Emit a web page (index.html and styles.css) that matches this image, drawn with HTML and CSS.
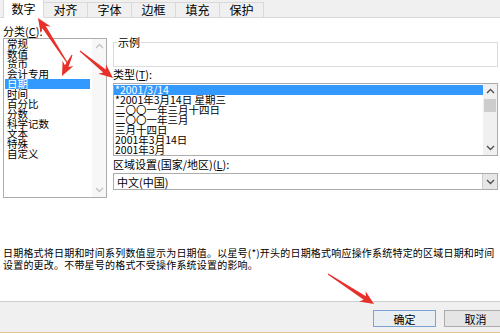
FILE: index.html
```html
<!DOCTYPE html>
<html lang="zh-CN">
<head>
<meta charset="utf-8">
<title>设置单元格格式</title>
<link rel="stylesheet" href="styles.css">
</head>
<body>
<div class="dialog">
  <div class="tabs">
    <div class="tab active">数字</div>
    <div class="tab">对齐</div>
    <div class="tab">字体</div>
    <div class="tab">边框</div>
    <div class="tab">填充</div>
    <div class="tab">保护</div>
  </div>
  <div class="panel">
    <div class="left">
      <div class="label">分类(<u>C</u>):</div>
      <div class="listbox cat">
        <ul class="items">
          <li>常规</li>
          <li>数值</li>
          <li>货币</li>
          <li>会计专用</li>
          <li class="sel">日期</li>
          <li>时间</li>
          <li>百分比</li>
          <li>分数</li>
          <li>科学记数</li>
          <li>文本</li>
          <li>特殊</li>
          <li>自定义</li>
        </ul>
        <div class="vscroll off">
          <div class="sbtn"><svg width="9" height="6" viewBox="0 0 9 6"><polyline points="1,5 4.5,1.5 8,5" /></svg></div>
          <div class="track"></div>
          <div class="sbtn"><svg width="9" height="6" viewBox="0 0 9 6"><polyline points="1,1 4.5,4.5 8,1" /></svg></div>
        </div>
      </div>
    </div>
    <div class="right">
      <fieldset class="sample"><legend>示例</legend></fieldset>
      <div class="label lbl-type">类型(<u>T</u>):</div>
      <div class="listbox types">
        <ul class="items">
          <li class="sel">*2001/3/14</li>
          <li>*2001年3月14日 星期三</li>
          <li>二〇〇一年三月十四日</li>
          <li>二〇〇一年三月</li>
          <li>三月十四日</li>
          <li>2001年3月14日</li>
          <li>2001年3月</li>
        </ul>
        <div class="vscroll">
          <div class="sbtn"><svg width="9" height="6" viewBox="0 0 9 6"><polyline points="1,5 4.5,1.5 8,5" /></svg></div>
          <div class="track"><div class="thumb"></div></div>
          <div class="sbtn"><svg width="9" height="6" viewBox="0 0 9 6"><polyline points="1,1 4.5,4.5 8,1" /></svg></div>
        </div>
      </div>
      <div class="label lbl-locale">区域设置(国家/地区)(<u>L</u>):</div>
      <div class="combo">
        <span class="combo-text">中文(中国)</span>
        <div class="dropbtn"><svg width="9" height="6" viewBox="0 0 9 6"><polyline points="1,1 4.5,4.5 8,1" /></svg></div>
      </div>
    </div>
  </div>
  <p class="desc">日期格式将日期和时间系列数值显示为日期值。以星号(*)开头的日期格式响应操作系统特定的区域日期和时间设置的更改。不带星号的格式不受操作系统设置的影响。</p>
  <div class="footer">
    <button class="btn default">确定</button>
    <button class="btn">取消</button>
  </div>
</div>
<svg class="arrows" width="500" height="333" viewBox="0 0 500 333">
  <polygon points="68.4,63.7 45.7,26.1 50.7,26.5 38,18 40.6,33.0 42.3,28.3 67.6,64.3" />
  <polygon points="72.5,55.2 68.5,67.0 73.4,66.0 62,76 62.6,60.8 64.9,65.2 71.6,54.8" />
  <polygon points="79.7,51.4 103.2,72.6 98.4,73.8 113,78 106.0,64.5 105.7,69.5 80.3,50.6" />
  <polygon points="327.7,274.4 363.7,299.7 359.0,301.4 374,304 365.6,291.3 365.9,296.3 328.3,273.6" />
</svg>
</body>
</html>
```

FILE: styles.css
```css
* { box-sizing: border-box; }

body {
  margin: 0;
  width: 500px;
  height: 333px;
  overflow: hidden;
  position: relative;
  background: #ffffff;
  color: #000000;
  font-family: "Noto Sans CJK SC", "Noto Sans", sans-serif;
}

.dialog {
  display: flex;
  flex-direction: column;
  height: 333px;
}

/* tabs */
.tabs {
  height: 18px;
  flex: none;
  display: flex;
  align-items: flex-end;
  padding-left: 3px;
  background: #f0f0f0;
  border-bottom: 1px solid #d9d9d9;
}
.tab {
  width: 45px;
  height: 15px;
  margin-right: -1px;
  border: 1px solid #d9d9d9;
  border-bottom: none;
  background: #f0f0f0;
  font-size: 12px;
  line-height: 14px;
  text-align: center;
}
.tab.active {
  width: 41px;
  height: 19px;
  margin-bottom: -1px;
  background: #ffffff;
  line-height: 18px;
  position: relative;
  z-index: 1;
}

/* panel */
.panel {
  display: flex;
  padding: 6px 0 0 3px;
  flex: none;
}
.left {
  width: 104px;
  flex: none;
}
.right {
  width: 385px;
  margin-left: 6px;
  flex: none;
}

.label {
  font-size: 11px;
  line-height: 14px;
  height: 14px;
  white-space: nowrap;
}

.listbox {
  border: 1px solid #acacac;
  display: flex;
  background: #ffffff;
}
.listbox.cat {
  height: 160px;
}
.listbox.types {
  height: 73px;
  padding-top: 1px;
}

.items {
  list-style: none;
  margin: 0;
  padding: 0;
  flex: 1;
  min-width: 0;
}
.items li {
  font-size: 10.5px;
  line-height: 10px;
  height: 10px;
  padding-left: 2px;
  white-space: nowrap;
}
.cat .items {
  padding: 0 2px 0 1px;
}
.types .items li {
  padding-left: 1px;
}
.items li.sel {
  background: #3399ff;
  color: #ffffff;
}

.vscroll {
  width: 14px;
  flex: none;
  display: flex;
  flex-direction: column;
  background: #f0f0f0;
}
.types .vscroll {
  margin-top: -1px;
}
.sbtn {
  height: 14px;
  flex: none;
  display: flex;
  align-items: center;
  justify-content: center;
}
.sbtn svg polyline,
.dropbtn svg polyline {
  fill: none;
  stroke: #505050;
  stroke-width: 1.4;
}
.vscroll.off .sbtn svg polyline {
  stroke: #c4c4c4;
}
.vscroll.off {
  background: #f7f7f7;
}
.track {
  flex: 1;
  padding: 1px 1px 0;
}
.thumb {
  height: 13px;
  background: #cdcdcd;
}

/* sample group */
.sample {
  margin: 12px 0 0 0;
  padding: 0;
  height: 31px;
  border: 1px solid #dcdcdc;
}
.sample legend {
  font-size: 11px;
  line-height: 12px;
  padding: 0 1px;
  margin-left: 3px;
}
.lbl-type {
  height: 16px;
  line-height: 15px;
}
.lbl-locale {
  height: 17px;
  line-height: 16px;
}

/* combo */
.combo {
  height: 17px;
  border: 1px solid #acacac;
  display: flex;
  align-items: center;
}
.combo-text {
  flex: 1;
  font-size: 11px;
  line-height: 14px;
  padding-left: 3px;
}
.dropbtn {
  width: 15px;
  height: 15px;
  background: #e6e6e6;
  border-left: 1px solid #cfcfcf;
  display: flex;
  align-items: center;
  justify-content: center;
}

/* description */
.desc {
  margin: 49px 0 0 0;
  padding: 0 3px;
  font-size: 10px;
  letter-spacing: 0.2px;
  line-height: 12px;
}

/* footer */
.footer {
  margin-top: auto;
  height: 32px;
  flex: none;
  display: flex;
  gap: 8px;
  padding: 8px 0 0 373px;
  background: #f0f0f0;
  border-top: 1px solid #cfcfcf;
  border-bottom: 1px solid #e2c48e;
  overflow: hidden;
}
.btn {
  width: 63px;
  height: 17px;
  flex: none;
  padding: 0;
  font-family: inherit;
  font-size: 11px;
  line-height: 14px;
  color: #000000;
  background: #e5e5e5;
  border: 1px solid #acacac;
}
.btn.default {
  border-color: #7aa3d4;
  background: #e9eef3;
}

/* annotation arrows */
.arrows {
  position: absolute;
  left: 0;
  top: 0;
  pointer-events: none;
}
.arrows polygon {
  fill: #e8302a;
}
```
